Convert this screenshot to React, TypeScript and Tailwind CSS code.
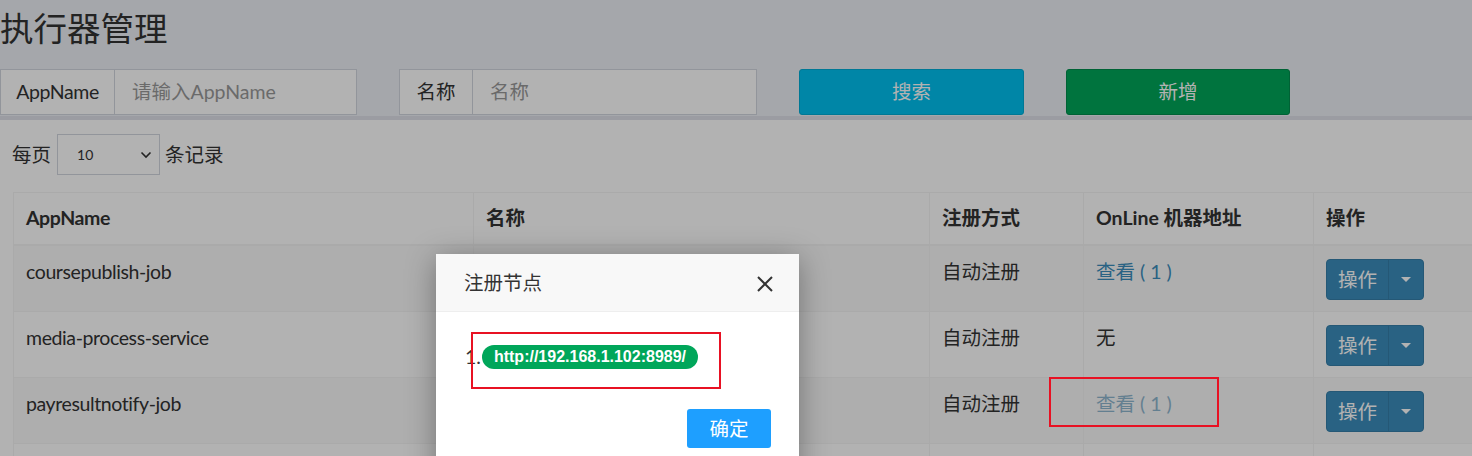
import React from "react";

type Row = {
  app: string;
  title: string;
  type: string;
  online: "link" | "none";
  visited?: boolean;
};

const rows: Row[] = [
  { app: "coursepublish-job", title: "课程发布任务", type: "自动注册", online: "link" },
  { app: "media-process-service", title: "媒资处理服务", type: "自动注册", online: "none" },
  { app: "payresultnotify-job", title: "支付结果通知", type: "自动注册", online: "link", visited: true },
  { app: "checkcode-job", title: "验证码任务", type: "自动注册", online: "none" },
];

function OpButton() {
  return (
    <div className="flex h-[41px] w-[98px] overflow-hidden rounded-[4px] border border-[#367fa9] bg-[#3c8dbc] text-white">
      <div className="flex w-[61px] items-center justify-center">操作</div>
      <div className="flex flex-1 items-center justify-center border-l border-[#367fa9]">
        <span className="h-0 w-0 border-x-[5px] border-t-[5px] border-x-transparent border-t-white" />
      </div>
    </div>
  );
}

export default function App() {
  return (
    <div className="relative h-[456px] w-[1472px] overflow-hidden bg-white text-[19.5px] text-[#333] font-['Lato','Noto_Sans_CJK_SC',sans-serif]">
      {/* page header */}
      <div className="h-[116px] bg-[#ecf0f5]">
        <h1 className="flex h-[58px] items-center text-[33.5px] leading-none font-normal">执行器管理</h1>
        <div className="mt-[11px] flex h-[46px]">
          <div className="flex w-[357px] border border-[#d2d6de] bg-white">
            <div className="flex w-[114px] shrink-0 items-center justify-center border-r border-[#d2d6de] tracking-[-0.4px]">
              AppName
            </div>
            <input
              className="min-w-0 flex-1 bg-transparent pl-[17px] outline-none placeholder:text-[#999]"
              placeholder="请输入AppName"
            />
          </div>
          <div className="ml-[42px] flex w-[358px] border border-[#d2d6de] bg-white">
            <div className="flex w-[73px] shrink-0 items-center justify-center border-r border-[#d2d6de]">名称</div>
            <input
              className="min-w-0 flex-1 bg-transparent pl-[17px] outline-none placeholder:text-[#999]"
              placeholder="名称"
            />
          </div>
          <button className="ml-[42px] w-[225px] rounded-[3px] border border-[#00acd6] bg-[#00c0ef] text-white">搜索</button>
          <button className="ml-[42px] w-[224px] rounded-[3px] border border-[#008d4c] bg-[#00a65a] text-white">新增</button>
        </div>
      </div>
      <div className="h-[4px] bg-[#dfe0e9]" />

      {/* box body */}
      <div className="pl-[12px]">
        <div className="mt-[14px] flex h-[41px] items-center">
          <span>每页</span>
          <div className="ml-[6px] flex h-[41px] w-[103px] items-center justify-between border border-[#d2d6de] pl-[19px] pr-[7px] text-[14px]">
            <span>10</span>
            <svg width="12" height="8" viewBox="0 0 12 8">
              <path d="M1.5 1.5 L6 6 L10.5 1.5" fill="none" stroke="#333" strokeWidth="1.6" />
            </svg>
          </div>
          <span className="ml-[5px]">条记录</span>
        </div>

        <table className="mt-[17px] ml-px w-[1480px] table-fixed border-collapse border border-[#f4f4f4] leading-[28px]">
          <colgroup>
            <col className="w-[460px]" />
            <col className="w-[456px]" />
            <col className="w-[154px]" />
            <col className="w-[230px]" />
            <col />
          </colgroup>
          <thead>
            <tr className="font-bold">
              <th className="border border-b-2 border-[#f4f4f4] px-[12px] pt-[11px] pb-[12px] text-left tracking-[-0.4px]">AppName</th>
              <th className="border border-b-2 border-[#f4f4f4] px-[12px] pt-[11px] pb-[12px] text-left">名称</th>
              <th className="border border-b-2 border-[#f4f4f4] px-[12px] pt-[11px] pb-[12px] text-left">注册方式</th>
              <th className="border border-b-2 border-[#f4f4f4] px-[12px] pt-[11px] pb-[12px] text-left">OnLine 机器地址</th>
              <th className="border border-b-2 border-[#f4f4f4] px-[12px] pt-[11px] pb-[12px] text-left">操作</th>
            </tr>
          </thead>
          <tbody>
            {rows.map((r, i) => (
              <tr key={r.app} className={i % 2 === 0 ? "bg-[#f9f9f9]" : "bg-white"}>
                <td className="border border-[#f4f4f4] p-[12px] align-top tracking-[-0.4px]">{r.app}</td>
                <td className="border border-[#f4f4f4] p-[12px] align-top">{r.title}</td>
                <td className="border border-[#f4f4f4] p-[12px] align-top">{r.type}</td>
                <td className="border border-[#f4f4f4] p-[12px] align-top">
                  {r.online === "link" ? (
                    <a className={r.visited ? "text-[#8fb6cf]" : "text-[#3c8dbc]"}>查看 ( 1 )</a>
                  ) : (
                    "无"
                  )}
                </td>
                <td className="border border-[#f4f4f4] px-[12px] pt-[13px] pb-[11px] align-top">
                  <OpButton />
                </td>
              </tr>
            ))}
          </tbody>
        </table>
      </div>

      {/* modal backdrop */}
      <div className="absolute inset-0 bg-black/30" />

      {/* modal */}
      <div className="absolute left-[436px] top-[254px] h-[240px] w-[363px] rounded-[2px] bg-white shadow-[0_5px_30px_rgba(0,0,0,0.35)]">
        <div className="relative flex h-[58px] items-center border-b border-[#eee] bg-[#f8f8f8] pl-[28px]">
          注册节点
          <svg className="absolute right-[26px] top-[22px]" width="16" height="16" viewBox="0 0 16 16">
            <path d="M1 1 L15 15 M15 1 L1 15" stroke="#333" strokeWidth="2" />
          </svg>
        </div>
        <div className="flex h-[28px] items-center pl-[29px] mt-[31px]">
          <span>1.</span>
          <span className="ml-[1px] flex h-[24px] items-center rounded-full bg-[#00a65a] px-[12px] font-['Liberation_Sans',sans-serif] text-[16px] font-bold text-white">
            http://192.168.1.102:8989/
          </span>
        </div>
        <div className="mt-[38px] flex justify-end pr-[28px]">
          <button className="h-[39px] w-[84px] rounded-[3px] bg-[#1e9fff] text-white">确定</button>
        </div>
      </div>

      {/* annotation boxes */}
      <div className="absolute left-[471px] top-[332px] h-[57px] w-[250px] border-2 border-[#e81123]" />
      <div className="absolute left-[1049px] top-[377px] h-[50px] w-[170px] border-2 border-[#e81123]" />
    </div>
  );
}
